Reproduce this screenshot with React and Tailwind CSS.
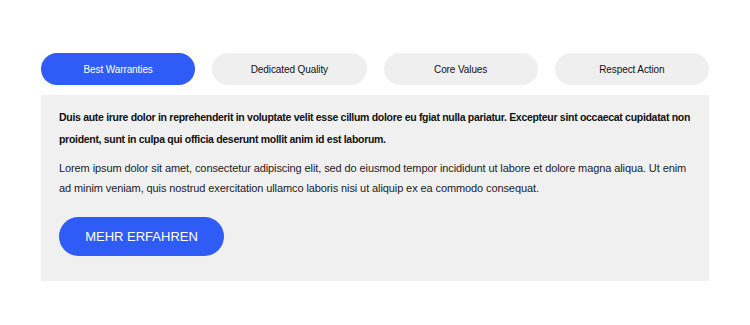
import React, { useState } from "react";

const tabs = ["Best Warranties", "Dedicated Quality", "Core Values", "Respect Action"];

export default function App() {
    const [active, setActive] = useState(0);
    return (
        <div className="w-[750px] h-[325px] bg-white pt-[53px] px-[41px]" style={{ fontFamily: "'Liberation Sans', Arial, sans-serif" }}>
            <div className="grid grid-cols-4 gap-x-[17px]">
                {tabs.map((t, i) => (
                    <button
                        key={t}
                        onClick={() => setActive(i)}
                        className={`h-[32px] rounded-full text-[10px] tracking-[-0.1px] ${i === active ? "bg-[#2f5cf6] text-white" : "bg-[#efefef] text-[#111]"}`}
                    >
                        {t}
                    </button>
                ))}
            </div>
            <div className="mt-[10px] bg-[#f0f0f0] h-[186px] pl-[18px] pr-[16px] pt-[11px]">
                <p className="text-[10.5px] font-bold tracking-[-0.3px] leading-[22px] text-[#111]">
                    Duis aute irure dolor in reprehenderit in voluptate velit esse cillum dolore eu fgiat nulla pariatur. Excepteur sint occaecat cupidatat non proident, sunt in culpa qui officia deserunt mollit anim id est laborum.
                </p>
                <p className="mt-[8px] text-[11px] tracking-[-0.1px] leading-[20px] text-[#222]">
                    Lorem ipsum dolor sit amet, consectetur adipiscing elit, sed do eiusmod tempor incididunt ut labore et dolore magna aliqua. Ut enim ad minim veniam, quis nostrud exercitation ullamco laboris nisi ut aliquip ex ea commodo consequat.
                </p>
                <button className="mt-[19px] w-[165px] h-[39px] rounded-full bg-[#2f5cf6] text-white text-[13px] uppercase">
                    Mehr erfahren
                </button>
            </div>
        </div>
    );
}
